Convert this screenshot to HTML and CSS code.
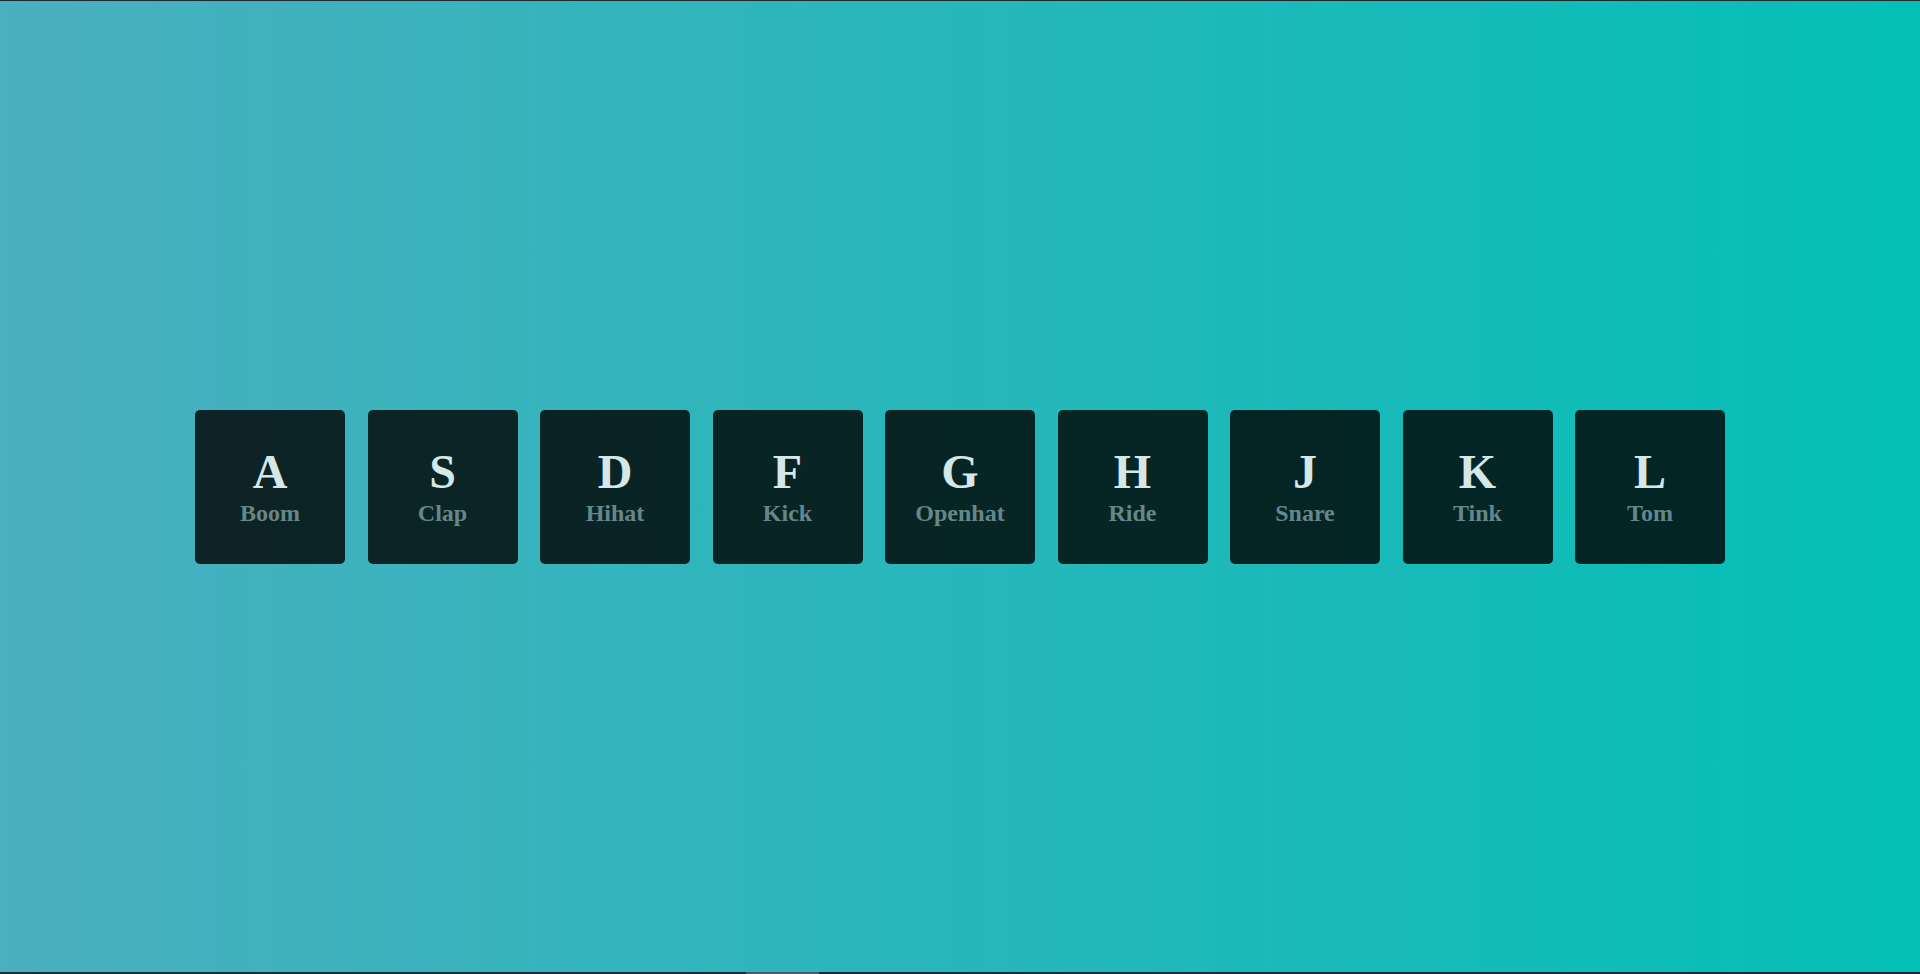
FILE: index.html
```html
<!DOCTYPE html>
<html lang="en">
<head>
<meta charset="utf-8">
<title>Drum Kit</title>
<link rel="stylesheet" href="styles.css">
</head>
<body>
<div class="edge-top"></div>
<main class="stage">
  <div class="keys">
    <div class="key"><kbd class="letter">A</kbd><span class="sound">Boom</span></div>
    <div class="key"><kbd class="letter">S</kbd><span class="sound">Clap</span></div>
    <div class="key"><kbd class="letter">D</kbd><span class="sound">Hihat</span></div>
    <div class="key"><kbd class="letter">F</kbd><span class="sound">Kick</span></div>
    <div class="key"><kbd class="letter">G</kbd><span class="sound">Openhat</span></div>
    <div class="key"><kbd class="letter">H</kbd><span class="sound">Ride</span></div>
    <div class="key"><kbd class="letter">J</kbd><span class="sound">Snare</span></div>
    <div class="key"><kbd class="letter">K</kbd><span class="sound">Tink</span></div>
    <div class="key"><kbd class="letter">L</kbd><span class="sound">Tom</span></div>
  </div>
</main>
<div class="edge-bottom"><span class="edge-thumb"></span></div>
</body>
</html>
```

FILE: styles.css
```css
html, body {
  margin: 0;
  padding: 0;
  height: 100%;
}

body {
  display: flex;
  flex-direction: column;
  background: linear-gradient(to right, #4aafbf, #04bfb6);
  font-family: "Liberation Serif", "Times New Roman", serif;
  overflow: hidden;
}

.edge-top {
  height: 1px;
  background: #1d2b2c;
  flex: none;
}

.edge-bottom {
  height: 2px;
  background: #1f2d2e;
  flex: none;
  display: flex;
}

.edge-thumb {
  margin-left: 746px;
  width: 73px;
  background: #4e5c5e;
}

.stage {
  flex: 1;
  display: flex;
  align-items: center;
  justify-content: center;
}

.keys {
  display: flex;
  gap: 22.5px;
}

.key {
  width: 150px;
  height: 154px;
  box-sizing: border-box;
  border-radius: 5px;
  background: rgba(0, 0, 0, 0.8);
  display: flex;
  flex-direction: column;
  align-items: center;
  justify-content: center;
  gap: 4.5px;
}

.letter {
  display: block;
  font-family: "Liberation Serif", "Times New Roman", serif;
  font-weight: bold;
  font-size: 48px;
  line-height: 48px;
  color: #d6e7e7;
}

.sound {
  display: block;
  font-weight: bold;
  font-size: 24px;
  line-height: 24px;
  color: #66878a;
}
```
